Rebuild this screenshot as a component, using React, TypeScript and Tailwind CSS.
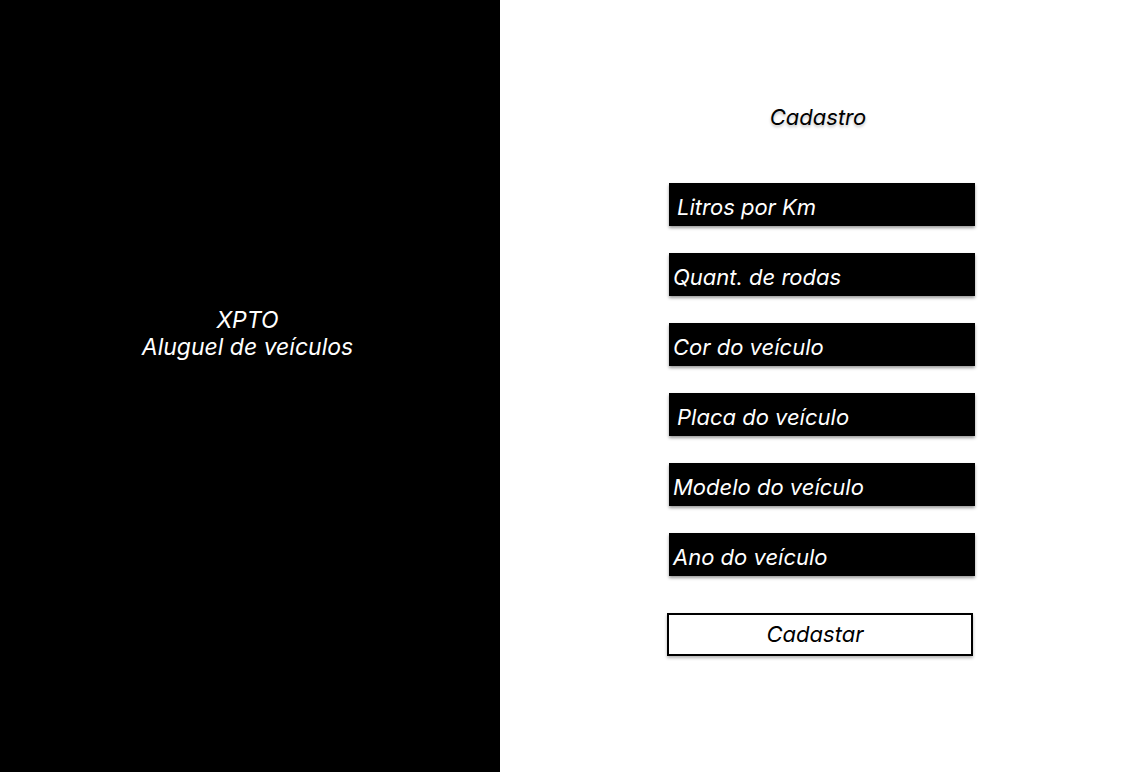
const fields = [
  { label: "Litros por Km", pad: "pl-2" },
  { label: "Quant. de rodas", pad: "pl-1" },
  { label: "Cor do veículo", pad: "pl-1" },
  { label: "Placa do veículo", pad: "pl-2" },
  { label: "Modelo do veículo", pad: "pl-1" },
  { label: "Ano do veículo", pad: "pl-1" },
];

export default function App() {
  return (
    <div className="flex h-[772px] w-[1140px] font-['Inter','Liberation_Sans',sans-serif] italic">
      {/* Left panel */}
      <div className="flex w-[500px] flex-col items-center bg-black pr-[5px] pt-[307px] text-[23px] leading-[27px] text-white">
        <span>XPTO</span>
        <span>Aluguel de veículos</span>
      </div>

      {/* Right panel */}
      <div className="flex flex-1 flex-col items-center bg-white pt-[105px]">
        <h1 className="ml-[-4px] text-[22px] leading-[24px] text-black [text-shadow:0_2px_3px_rgba(0,0,0,0.25)]">
          Cadastro
        </h1>

        <div className="mt-[54px] flex flex-col gap-[27px]">
          {fields.map((f) => (
            <div
              key={f.label}
              className={`flex h-[43px] w-[306px] translate-x-[2px] items-center bg-black pt-[6px] text-[22px] text-white shadow-[0_2px_3px_rgba(0,0,0,0.4)] ${f.pad}`}
            >
              {f.label}
            </div>
          ))}
        </div>

        <button className="mt-[37px] flex h-[43px] w-[306px] items-center justify-center border-2 border-black bg-white pr-[10px] text-[22px] italic text-black shadow-[0_2px_3px_rgba(0,0,0,0.3)]">
          Cadastar
        </button>
      </div>
    </div>
  );
}
